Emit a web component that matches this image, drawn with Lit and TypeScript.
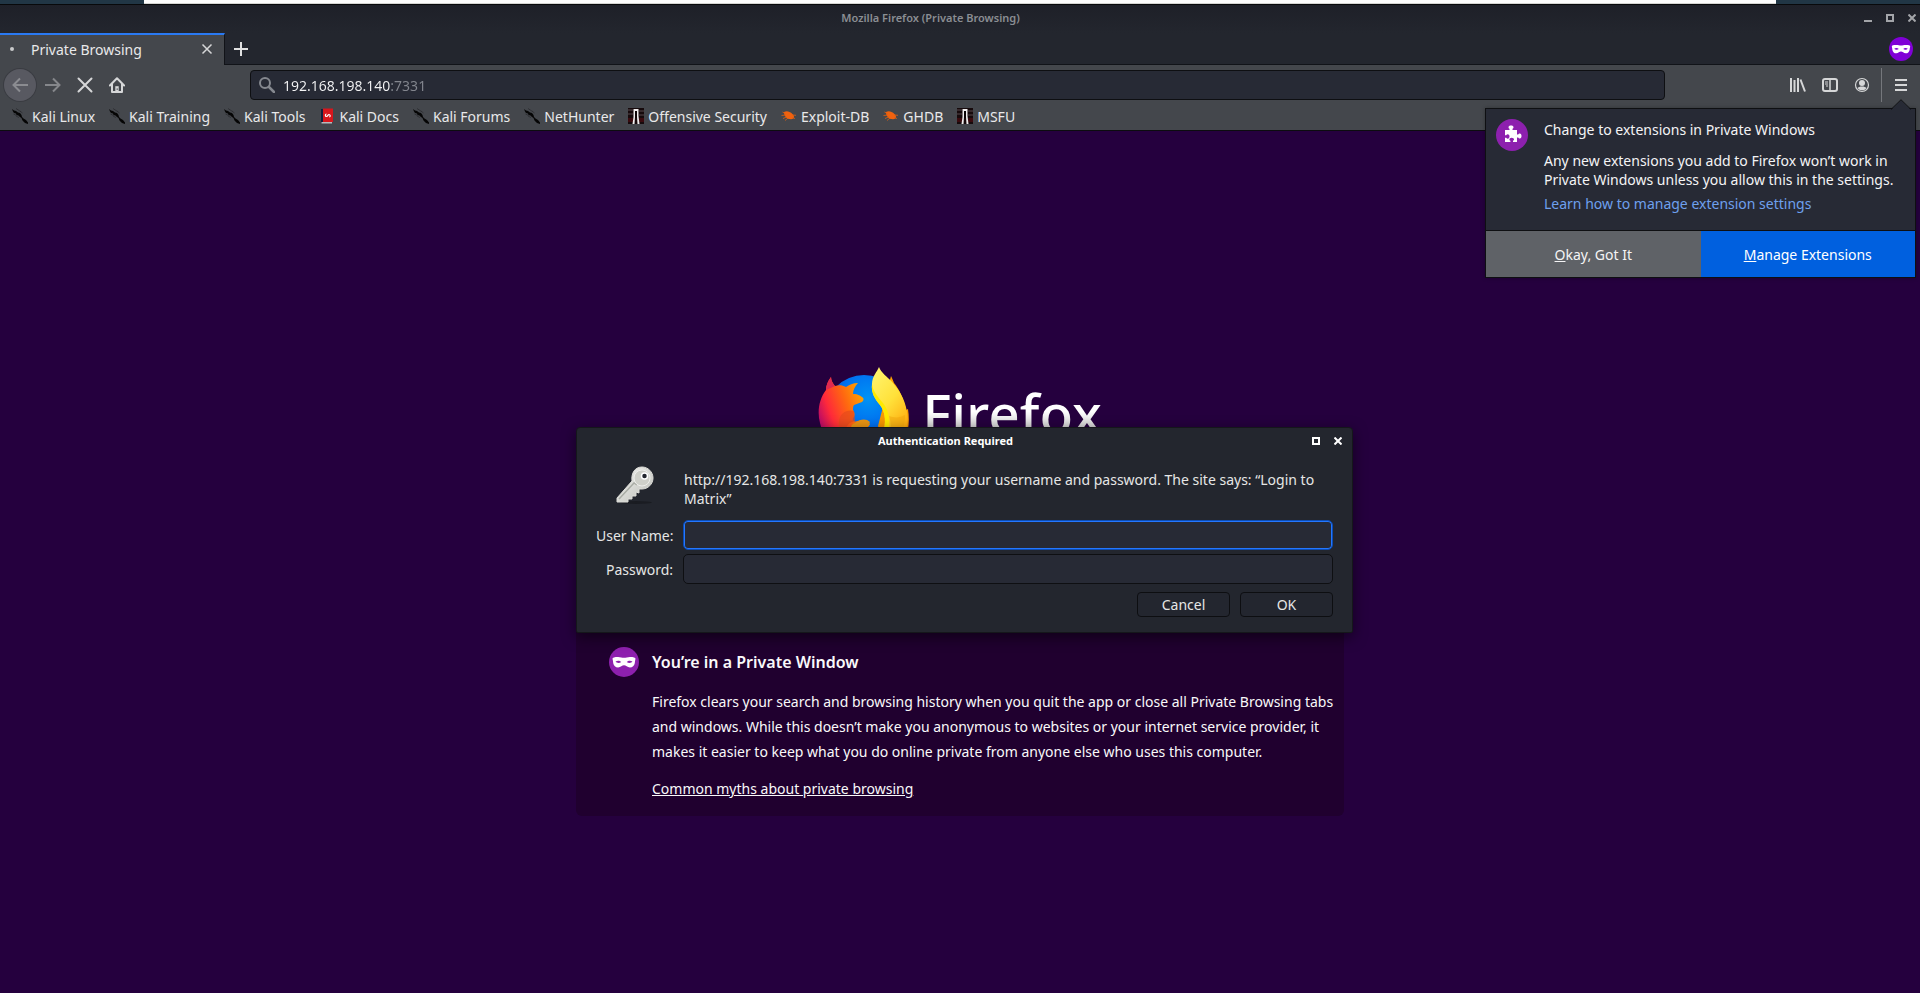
import { LitElement, html, css, svg } from "lit";
import { customElement, state } from "lit/decorators.js";

type Mark = "dragon" | "docs" | "offsec" | "bug";

const BOOKMARKS: { label: string; mark: Mark }[] = [
  { label: "Kali Linux", mark: "dragon" },
  { label: "Kali Training", mark: "dragon" },
  { label: "Kali Tools", mark: "dragon" },
  { label: "Kali Docs", mark: "docs" },
  { label: "Kali Forums", mark: "dragon" },
  { label: "NetHunter", mark: "dragon" },
  { label: "Offensive Security", mark: "offsec" },
  { label: "Exploit-DB", mark: "bug" },
  { label: "GHDB", mark: "bug" },
  { label: "MSFU", mark: "offsec" },
];

const MARKS = {
  dragon: svg`
    <path d="M0 1l2 1.500L4 3l2 1.500 2 .5 1.500 2 .5 2 1.500 1.500L14 12l2 2.500V16l-3-1-2.500-2.500L9.500 10 8 9 6.500 7.500 4.500 7 4 5.500 2 5 1 3.500z" fill="#050505"/>
    <path d="M4 .5 8.500 3.500M8 3l2.500 2M1.500 6l3 1.500M4 8l3 1.500" stroke="#26272b" stroke-width=".7"/>`,
  docs: svg`
    <path d="M2 1h2.500v13.500H2z" fill="#13203d"/><path d="M4 .5h10V14H4z" fill="#d8161c"/>
    <path d="M2.500 14H13v1.500H2.500z" fill="#b9babd"/>
    <path d="M7.500 6C6 6 6 8.500 7.500 8.500S8.800 6.500 10 6.500s1.800 2 .3 2.500" stroke="#fff" stroke-width="1.200"/>`,
  offsec: svg`
    <path d="M0 0h16v16H0z" fill="#160a0c"/>
    <path d="M0 2h5M11 3h5M0 6h5M11 7h5" stroke="#57494c" stroke-width="1"/>
    <path d="M0 10h5v4H0zM11 10h5v4h-5z" fill="#3a0b0f"/>
    <path d="M5.500 1h5v7l1 8h-2L9 9V3H7v6l-.5 7h-2l1-7z" fill="#f1eeee"/>
    <path d="M7 3h2v7H7z" fill="#0b0405"/>`,
  bug: svg`
    <path d="M3 4c2-1 3.500-1 5.500 0 2.300 1 4 2.500 4.500 4.500 0 1.700-1 2.800-3 2.800-2.500 0-4.500-.8-5.500-2.500C3.500 7.500 3 6 3 4z" fill="#f0620f"/>
    <path d="M1.500 4l3 1.500M.5 7.500 5 7M2 10.500l3.500-1.500M4 12.500l3-2.500M11 7l4 .3M11 9.500l3 1" stroke="#e0600f" stroke-width=".8"/>`,
};

const mask = (size: number, fill: string) => html`
  <svg width=${size} height=${size} viewBox="0 0 24 24" aria-hidden="true">
    <circle cx="12" cy="12" r="12" fill=${fill} />
    <path
      d="M2.800 9.400C2.700 8.200 4.500 7.900 7.200 7.900c1.900 0 3.400.7 4.800.7s2.900-.7 4.800-.7c2.700 0 4.500.3 4.400 1.500-.4 1.200-.4 2.400-.6 3.500-.4 2-1.800 3.400-3.900 3.400-2 0-3.200-1.700-4.700-1.700s-2.700 1.700-4.700 1.700c-2.100 0-3.500-1.400-3.900-3.400-.2-1.100-.2-2.300-.6-3.500z"
      fill="#fff"
    />
    <path d="M5.200 11.800c1.300-1.200 3.300-1.200 4.600.2-1.400 1-3.400 1-4.600-.2zM18.800 11.800c-1.300-1.200-3.300-1.200-4.600.2 1.400 1 3.400 1 4.600-.2z" fill=${fill} />
  </svg>
`;

const foxLogo = html`
  <svg width="92" height="88" viewBox="0 0 92 88" aria-hidden="true">
    <defs>
      <radialGradient id="globe" cx=".55" cy=".3" r=".7">
        <stop offset="0" stop-color="#0093f5" />
        <stop offset=".5" stop-color="#0070f0" />
        <stop offset="1" stop-color="#2b2a8f" />
      </radialGradient>
      <linearGradient id="body" x1="0" y1=".6" x2=".75" y2=".35">
        <stop offset="0" stop-color="#b5086a" />
        <stop offset=".22" stop-color="#ff2a3a" />
        <stop offset=".5" stop-color="#ff6611" />
        <stop offset=".8" stop-color="#ffa400" />
      </linearGradient>
      <linearGradient id="tail" x1=".2" y1="0" x2=".7" y2="1">
        <stop offset="0" stop-color="#fff36b" />
        <stop offset=".45" stop-color="#ffe13a" />
        <stop offset="1" stop-color="#ff9a00" />
      </linearGradient>
      <linearGradient id="edge" x1="0" y1="0" x2="0" y2="1">
        <stop offset="0" stop-color="#ffa800" />
        <stop offset="1" stop-color="#f08a00" />
      </linearGradient>
    </defs>
    <circle cx="46" cy="48" r="39" fill="url(#globe)" />
    <path d="M73 10c1 2 2 4 3 7 5 6 9 14 12 27l2-1c3 20-2 36-18 44L60 60z" fill="url(#edge)" />
    <path
      d="M61 1c-2 5-7 9-7 17-1 9 3 15 8 21 6 8 6 18 3 29l3 16c18-8 24-24 21-38-2-14-9-23-14-29C69 10 63 7 61 1z"
      fill="url(#tail)"
    />
    <path d="M54 18c-1 9 3 15 8 21 6 8 6 18 3 29l6-2c1-14 0-21-6-29-6-7-10-12-11-19z" fill="#ffe900" />
    <path d="M71 50c1 3 2 7 2 12-1 8-3 13-7 19l15-10c5-8 6-15 6-22-5 3-11 3-16 1z" fill="#f2a50c" opacity=".5" />
    <path
      d="M13 11c-3 4-5 8-5 13C1 33-1 46 2 57c4 17 20 30 42 30 16 0 32-9 38-24-10 10-27 15-40 9-5-3-6-6-5-9 6 3 12 1 15-5-3-4-8-5-12-3-4 1-6 0-5-3 2-2 2-5 0-8 0-2 0-4 1-5l8-3c2-2 2-4 0-5-2-1-3-3-9-3 0-4 2-8 5-11-5 0-9 2-12 4-4-2-7-2-11-1-2-3-4-5-4-10z"
      fill="url(#body)"
    />
    <path d="M36 45c-7-2-14 2-15 10-1 6 2 12 7 16-2-9 1-14 9-16z" fill="#e64a1c" opacity=".7" />
    <path d="M37 57c5-4 11-5 15-1-3 6-9 8-15 7-5-1-5-4 0-6z" fill="#e99413" />
    <path d="M13 11c-3 4-5 8-5 13l9-4c-2-2-4-5-4-9z" fill="#e02950" />
  </svg>
`;

const keyIcon = html`
  <svg width="38" height="38" viewBox="0 0 38 38" aria-hidden="true">
    <defs>
      <linearGradient id="steel" x1="0" y1="0" x2="1" y2="1">
        <stop offset="0" stop-color="#f7f7f5" />
        <stop offset="1" stop-color="#b9bbb5" />
      </linearGradient>
    </defs>
    <ellipse cx="20" cy="36.500" rx="16" ry="1.500" fill="#1a1c22" />
    <path
      d="M26 1c6 0 11 5 11 11s-5 11-11 11l-3 0v4l-3-1v4h-4v3h-4v3H1v-4l15-17c-1-8 3-14 10-14z"
      fill="url(#steel)" stroke="#dcdcd8" stroke-width="1"
    />
    <path d="M3 33 18 17l3 2" stroke="#a9aca5" stroke-width="1.500" fill="none" />
    <circle cx="26" cy="12" r="8" fill="#cfd0ca" stroke="#eeeeeb" />
    <circle cx="28.500" cy="10" r="3" fill="#23262e" stroke="#fff" stroke-width="1.500" />
  </svg>
`;

const puzzleIcon = html`
  <svg width="32" height="32" viewBox="0 0 32 32" aria-hidden="true">
    <circle cx="16" cy="16" r="16" fill="#8d20ae" />
    <path
      d="M9 11h4.500V9.800c-.8-.5-1-1.200-1-1.600C12.500 7 13.500 6.500 15 6.500s2.500.6 2.500 1.700c0 .5-.2 1.100-1 1.600V11H21v4.500h1.200c.4-.8 1-1 1.600-1 1.100 0 1.700 1 1.700 2.500s-.6 2.500-1.700 2.500c-.6 0-1.200-.2-1.600-1H21V23h-4v-1.200c.8-.4 1-1 1-1.300 0-1-1-1.700-2.300-1.700s-2.300.7-2.300 1.700c0 .4.200.9 1 1.300V23H9v-4.300h1.200c.4.700 1 1 1.600 1 1 0 1.700-1 1.700-2.200s-.7-2.200-1.700-2.200c-.6 0-1.200.3-1.600 1H9z"
      fill="#fff"
    />
  </svg>
`;

@customElement("app-root")
export class AppRoot extends LitElement {
  @state() private address = "192.168.198.140:7331";

  static styles = css`
    :host {
      display: flex;
      flex-direction: column;
      position: relative;
      min-height: 100vh;
      box-sizing: border-box;
      background: #25003e;
      color: #e6e6e6;
      font: 14px/19px "Noto Sans", "Open Sans", sans-serif;
      overflow: hidden;
    }
    * { box-sizing: border-box; }
    svg { display: block; flex: none; }
    button {
      font: inherit;
      color: inherit;
      background: none;
      border: 0;
      padding: 0;
      margin: 0;
      display: flex;
      align-items: center;
      justify-content: center;
    }
    a { color: inherit; }

    .desk { height: 4px; background: #213645; padding: 0 144px; }
    .desk-page { height: 4px; background: #fdfdfc; border-bottom: 1px solid #d5d5d2; }

    .title-bar {
      display: grid;
      grid-template-columns: 1fr auto 1fr;
      align-items: center;
      height: 29px;
      padding: 0 3px 3px 0;
      border-top: 1px solid #08090b;
      background: linear-gradient(#1e2028, #23262e);
      color: #8b8e93;
      font-size: 11px;
      font-weight: 600;
    }
    .title-bar h1 { grid-column: 2; font: inherit; margin: 0 56px 0 0; }
    .win-buttons { display: flex; gap: 12px; justify-content: flex-end; }
    .win-buttons button { width: 10px; height: 16px; }

    .tab-strip {
      display: flex;
      align-items: stretch;
      height: 32px;
      background: #23262e;
      border-bottom: 1px solid #111318;
      padding-right: 7px;
    }
    .tab {
      display: flex;
      align-items: center;
      width: 225px;
      height: 32px;
      background: #44474c;
      border-top: 2px solid #2a7af3;
      border-right: 1px solid #111318;
      padding: 0 10px 2px;
      color: #e9e9ea;
    }
    .dot { width: 4px; height: 4px; border-radius: 50%; background: #c9cacc; margin-right: 17px; }
    .tab-title { flex: 1; }
    .new-tab { width: 32px; }
    .private-badge { margin-left: auto; align-self: center; }

    .nav-bar {
      display: flex;
      align-items: center;
      height: 40px;
      padding: 0 3px 0 4px;
      background: #44474c;
    }
    .nav-bar .tool { width: 32px; height: 32px; }
    .nav-bar .back { background: #585961; border-radius: 50%; box-shadow: 0 0 0 1px #3a3c42; margin-right: 1px; }
    .url-box {
      flex: 1;
      display: flex;
      align-items: center;
      height: 30px;
      margin: 0 117px;
      padding: 0 8px;
      gap: 8px;
      background: #272a35;
      border: 1px solid #0e0f12;
      border-radius: 4px;
    }
    .url-box input {
      flex: 1;
      border: 0;
      outline: 0;
      padding: 0;
      font: inherit;
      background: linear-gradient(90deg, #f4f4f5 108px, #83868e 108px);
      -webkit-background-clip: text;
      background-clip: text;
      color: transparent;
    }
    .menu-sep { width: 1px; height: 34px; background: #75777c; margin: 0 3px; }

    .bookmarks {
      display: flex;
      gap: 14px;
      height: 26px;
      padding: 0 12px 3px;
      align-items: center;
      background: #44474c;
      border-bottom: 1px solid #0c0c0f;
    }
    .bookmarks a { display: flex; align-items: center; gap: 4px; text-decoration: none; color: #e9e9ea; }

    .page {
      flex: 1;
      display: flex;
      flex-direction: column;
      align-items: center;
      padding: 235px 24px 24px;
      color: #f9f9fa;
    }
    .brand { display: flex; gap: 12px; height: 88px; margin: 0 0 163px; }
    .wordmark {
      font-size: 55px;
      font-weight: 500;
      line-height: 88px;
      margin: 3px 0 0;
      background: linear-gradient(#fff 50%, #ccc 70%);
      -webkit-background-clip: text;
      background-clip: text;
      color: transparent;
    }
    .info {
      display: grid;
      grid-template-columns: 30px 1fr;
      column-gap: 13px;
      width: 100%;
      max-width: 768px;
      background: #20002f;
      border-radius: 6px;
      padding: 30px 4px 15px 33px;
      line-height: 25px;
    }
    .info h2 { margin: 0; font-size: 16px; font-weight: 600; line-height: 30px; }
    .info-text { grid-column: 2; }
    .info-text p { margin: 12px 0; }

    .dialog {
      position: absolute;
      top: 427px;
      left: 50%;
      width: 777px;
      margin-left: -384px;
      padding: 0 19px 15px;
      border: 1px solid #15171b;
      border-radius: 4px 4px 2px 2px;
      background: #23262e;
      box-shadow: 0 4px 14px rgba(0, 0, 0, 0.5);
    }
    .dialog-title {
      display: grid;
      grid-template-columns: 1fr auto 1fr;
      align-items: center;
      height: 25px;
      margin: 0 -10px 1px -48px;
      font-size: 11px;
      font-weight: 700;
      color: #fff;
    }
    .dialog-title h2 { grid-column: 2; font: inherit; margin: 0; }
    .form {
      display: grid;
      grid-template-columns: 77px 1fr;
      column-gap: 10px;
      row-gap: 4px;
      align-items: center;
    }
    .form label { text-align: right; white-space: nowrap; }
    .form .key { justify-self: center; }
    .form .message { margin: 16px 12px 8px 1px; }
    .form input {
      width: 100%;
      height: 30px;
      padding: 0 8px;
      font: inherit;
      color: #fff;
      background: #272a35;
      border: 1px solid #0e0f12;
      border-radius: 5px;
      outline: 0;
    }
    .form input.active { border-color: #0c4cb4; box-shadow: inset 0 0 0 1px #2477ff; }
    .actions { display: flex; justify-content: flex-end; gap: 10px; margin-top: 8px; }
    .actions button {
      width: 93px;
      height: 25px;
      border: 1px solid #0d0e11;
      border-radius: 4px;
      background: #23262f;
    }

    .panel {
      position: absolute;
      top: 108px;
      right: 4px;
      width: 431px;
      background: #272a35;
      border: 1px solid #0e0f12;
      box-shadow: 0 0 4px rgba(0, 0, 0, 0.3);
      color: #f4f4f5;
    }
    .panel-arrow { position: absolute; top: -10px; right: 4px; }
    .panel-body {
      display: grid;
      grid-template-columns: 32px 1fr;
      column-gap: 16px;
      padding: 10px 10px 17px;
    }
    .panel-body h2 { margin: 0 0 11px; font: inherit; line-height: 21px; }
    .panel-body p { margin: 0 0 5px; }
    .panel-body a { color: #6ea0ee; text-decoration: none; }
    .panel-buttons { display: grid; grid-template-columns: 1fr 1fr; border-top: 1px solid #0e0f12; }
    .panel-buttons button { height: 46px; background: #5f6267; }
    .panel-buttons .primary { background: #0060df; color: #fff; }
  `;

  private onAddress(e: Event) {
    this.address = (e.target as HTMLInputElement).value;
  }

  render() {
    return html`
      <div class="desk"><div class="desk-page"></div></div>

      <header class="title-bar">
        <h1>Mozilla Firefox (Private Browsing)</h1>
        <div class="win-buttons">
          <button aria-label="Minimize"><svg width="8" height="8" viewBox="0 0 8 8"><path d="M0 6h8v2H0z" fill="#a3a5a9" /></svg></button>
          <button aria-label="Maximize"><svg width="8" height="8" viewBox="0 0 8 8"><path d="M1 1h6v6H1z" fill="none" stroke="#a3a5a9" stroke-width="2" /></svg></button>
          <button aria-label="Close"><svg width="8" height="8" viewBox="0 0 8 8"><path d="M.5 .5l7 7M7.500 .5l-7 7" stroke="#a3a5a9" stroke-width="2" /></svg></button>
        </div>
      </header>

      <div class="tab-strip">
        <div class="tab">
          <span class="dot"></span><span class="tab-title">Private Browsing</span>
          <button aria-label="Close tab">
            <svg width="14" height="12" viewBox="0 0 14 12"><path d="M2.500 1.500l9 9M11.500 1.500l-9 9" stroke="#d6d7d8" stroke-width="1.500" /></svg>
          </button>
        </div>
        <button class="new-tab" aria-label="New tab">
          <svg width="14" height="14" viewBox="0 0 14 14"><path d="M7 0v14M0 7h14" stroke="#e0e0e1" stroke-width="2" /></svg>
        </button>
        <span class="private-badge">${mask(24, "#8000d7")}</span>
      </div>

      <nav class="nav-bar">
        <button class="tool back" aria-label="Back">
          <svg width="16" height="16" viewBox="0 0 16 16"><path d="M16 8H1.500M8 1.500 1.500 8 8 14.500" fill="none" stroke="#8b8c91" stroke-width="2" /></svg>
        </button>
        <button class="tool" aria-label="Forward">
          <svg width="16" height="16" viewBox="0 0 16 16"><path d="M0 8h14.500M8 1.500 14.500 8 8 14.500" fill="none" stroke="#85878b" stroke-width="2" /></svg>
        </button>
        <button class="tool" aria-label="Stop">
          <svg width="16" height="16" viewBox="0 0 16 16"><path d="M1.500 1.500l13 13M14.500 1.500l-13 13" stroke="#d6d7d8" stroke-width="2" stroke-linecap="round" /></svg>
        </button>
        <button class="tool" aria-label="Home">
          <svg width="16" height="16" viewBox="0 0 16 16">
            <path d="M.9 8.500 8 1.300l7.100 7.200M3 7v8h10V7" fill="none" stroke="#d6d7d8" stroke-width="2" stroke-linejoin="round" stroke-linecap="round" />
            <path d="M6.300 9.200h3.400V15H6.300z" fill="#d6d7d8" /><path d="M7.600 11.500h1.200v1.200H7.600z" fill="#44474c" />
          </svg>
        </button>
        <label class="url-box">
          <svg width="16" height="16" viewBox="0 0 16 16"><circle cx="6" cy="6" r="5" fill="none" stroke="#85888f" stroke-width="2" /><path d="M10 10l5 5" stroke="#85888f" stroke-width="2.500" stroke-linecap="round" /></svg>
          <input type="text" aria-label="Address" .value=${this.address} @input=${this.onAddress} />
        </label>
        <button class="tool" aria-label="Library">
          <svg width="16" height="16" viewBox="0 0 16 16"><path d="M1 1v14M4.500 3v12M8 1v14" stroke="#d6d7d8" stroke-width="2" /><path d="M10.500 2.500 15 14.500" stroke="#d6d7d8" stroke-width="2" /></svg>
        </button>
        <button class="tool" aria-label="Sidebars">
          <svg width="16" height="16" viewBox="0 0 16 16"><rect x="1" y="2" width="14" height="12" rx="2" fill="none" stroke="#d6d7d8" stroke-width="2" /><path d="M8 2v12" stroke="#d6d7d8" stroke-width="1.500" /><path d="M3 5h3M3 7h3M4 9h2" stroke="#d6d7d8" stroke-width="1" /></svg>
        </button>
        <button class="tool" aria-label="Account">
          <svg width="16" height="16" viewBox="0 0 16 16"><circle cx="8" cy="8" r="6.500" fill="none" stroke="#d6d7d8" stroke-width="1.200" /><circle cx="8" cy="6" r="3" fill="#d6d7d8" /><path d="M3.500 11c1.500-1 2-1.500 4.500-1.500s3 .5 4.500 1.500C11.500 12.500 10 13.300 8 13.300S4.500 12.500 3.500 11z" fill="#d6d7d8" /></svg>
        </button>
        <span class="menu-sep"></span>
        <button class="tool" aria-label="Menu">
          <svg width="12" height="12" viewBox="0 0 12 12"><path d="M0 1h12M0 6h12M0 11h12" stroke="#d6d7d8" stroke-width="2" /></svg>
        </button>
      </nav>

      <nav class="bookmarks" aria-label="Bookmarks">
        ${BOOKMARKS.map(
          (b) => html`<a href="#"><svg width="16" height="16" viewBox="0 0 16 16" fill="none" aria-hidden="true">${MARKS[b.mark]}</svg>${b.label}</a>`
        )}
      </nav>

      <main class="page">
        <div class="brand">${foxLogo}<p class="wordmark">Firefox</p></div>
        <section class="info">
          ${mask(30, "#8d20ae")}
          <h2>You’re in a Private Window</h2>
          <div class="info-text">
            <p>
              Firefox clears your search and browsing history when you quit the app or close all Private Browsing tabs
              and windows. While this doesn’t make you anonymous to websites or your internet service provider, it
              makes it easier to keep what you do online private from anyone else who uses this computer.
            </p>
            <a href="#">Common myths about private browsing</a>
          </div>
        </section>
      </main>

      <section class="dialog" role="dialog" aria-labelledby="auth-title">
        <div class="dialog-title">
          <h2 id="auth-title">Authentication Required</h2>
          <div class="win-buttons">
            <button aria-label="Maximize"><svg width="8" height="8" viewBox="0 0 8 8"><path d="M1 1h6v6H1z" fill="none" stroke="#fff" stroke-width="2" /></svg></button>
            <button aria-label="Close"><svg width="8" height="8" viewBox="0 0 8 8"><path d="M.5 .5l7 7M7.500 .5l-7 7" stroke="#fff" stroke-width="2" /></svg></button>
          </div>
        </div>
        <form class="form" @submit=${(e: Event) => e.preventDefault()}>
          <span class="key">${keyIcon}</span>
          <p class="message">
            http://192.168.198.140:7331 is requesting your username and password. The site says: “Login to Matrix”
          </p>
          <label for="user">User Name:</label>
          <input id="user" class="active" type="text" />
          <label for="pass">Password:</label>
          <input id="pass" type="password" />
        </form>
        <div class="actions"><button>Cancel</button><button>OK</button></div>
      </section>

      <aside class="panel">
        <svg class="panel-arrow" width="20" height="11" viewBox="0 0 20 11">
          <path d="M0 11 10 1l10 10z" fill="#272a35" /><path d="M0 10.500 10 .7l10 9.800" fill="none" stroke="#0e0f12" />
        </svg>
        <div class="panel-body">
          ${puzzleIcon}
          <div>
            <h2>Change to extensions in Private Windows</h2>
            <p>Any new extensions you add to Firefox won’t work in Private Windows unless you allow this in the settings.</p>
            <a href="#">Learn how to manage extension settings</a>
          </div>
        </div>
        <div class="panel-buttons">
          <button><span><u>O</u>kay, Got It</span></button>
          <button class="primary"><span><u>M</u>anage Extensions</span></button>
        </div>
      </aside>
    `;
  }
}
